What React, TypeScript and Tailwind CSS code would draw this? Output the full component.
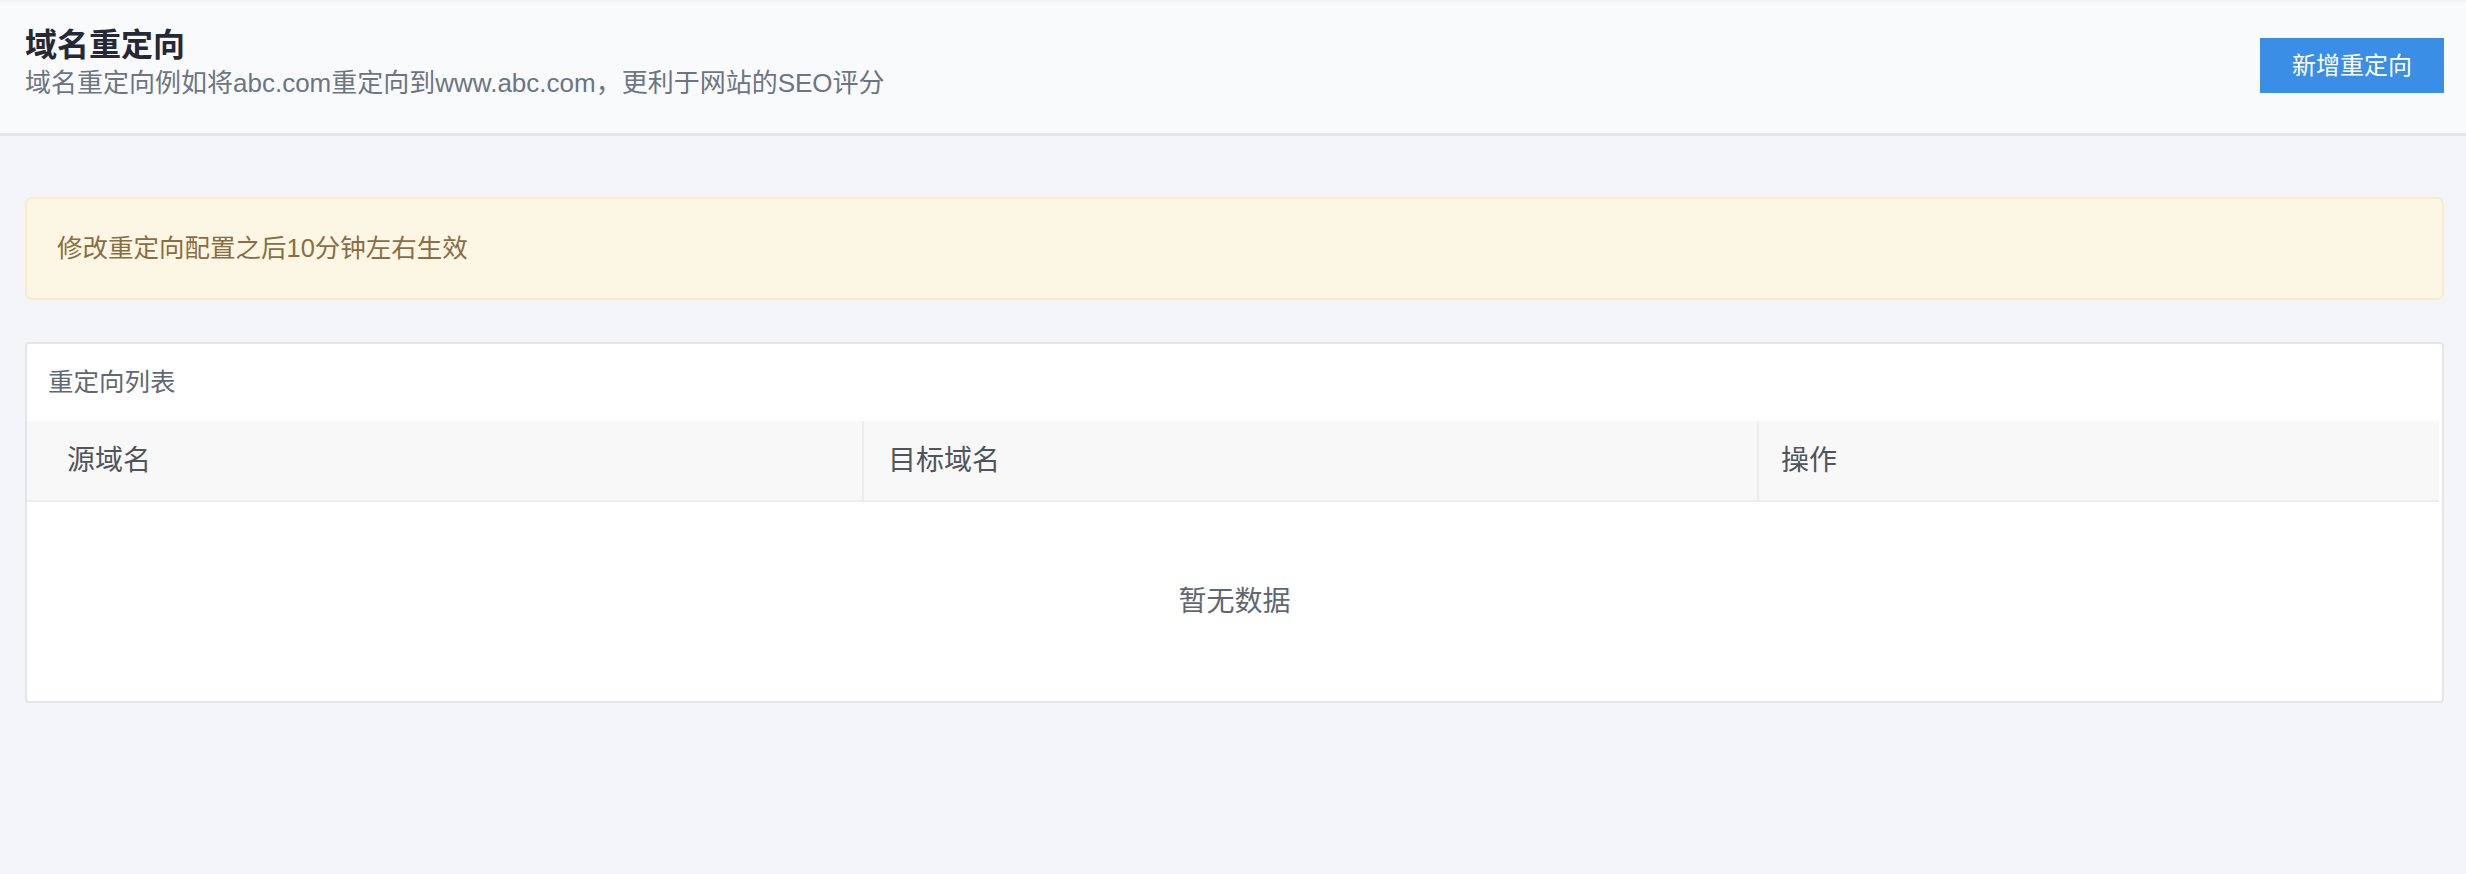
import React from "react";

const font = { fontFamily: '"Liberation Sans", "Noto Sans CJK SC", sans-serif' };

const columns = [
  { key: "source", label: "源域名", className: "w-[835px] pl-[40px]" },
  { key: "target", label: "目标域名", className: "w-[895px] pl-[24px] border-l-2 border-[#ececec]" },
  { key: "action", label: "操作", className: "flex-1 pl-[22px] border-l-2 border-[#ececec]" },
];

export default function App() {
  return (
    <div className="w-full h-[874px] bg-[#f4f5f9]" style={font}>
      {/* Page header */}
      <header className="h-[136px] bg-[#f9fafc] border-b-[3px] border-[#e3e5ea] shadow-[inset_0_3px_3px_-2px_rgba(0,0,0,0.06)] flex items-start justify-between pl-[25px] pr-[22px]">
        <div className="pt-[25px]">
          <h1 className="text-[32px] leading-[40px] font-bold text-[#252936]">域名重定向</h1>
          <p className="mt-[1px] text-[26px] leading-[34px] text-[#6b7583]">
            域名重定向例如将abc.com重定向到www.abc.com，更利于网站的SEO评分
          </p>
        </div>
        <button className="mt-[38px] w-[184px] h-[55px] bg-[#3b8ee6] text-white text-[24px] flex items-center justify-center">
          新增重定向
        </button>
      </header>

      <main className="pl-[25px] pr-[22px] pt-[61px]">
        {/* Notice */}
        <div className="h-[103px] bg-[#fcf6e4] border-2 border-[#faebc9] rounded-[7px] flex items-center pl-[30px] text-[25.5px] text-[#8a6e42]">
          修改重定向配置之后10分钟左右生效
        </div>

        {/* List card */}
        <section className="mt-[42px] bg-white border-2 border-[#e2e5ea] rounded-[4px]">
          <div className="h-[77px] flex items-center pl-[21px] text-[25.5px] text-[#5f6874]">重定向列表</div>
          <div className="flex h-[81px] mr-[3px] bg-[#f8f8f8] border-b-2 border-[#ebeced]">
            {columns.map((c) => (
              <div key={c.key} className={`flex items-center text-[28px] text-[#4f555c] ${c.className}`}>
                {c.label}
              </div>
            ))}
          </div>
          <div className="h-[199px] flex items-center justify-center text-[28px] text-[#5f6770]">暂无数据</div>
        </section>
      </main>
    </div>
  );
}
